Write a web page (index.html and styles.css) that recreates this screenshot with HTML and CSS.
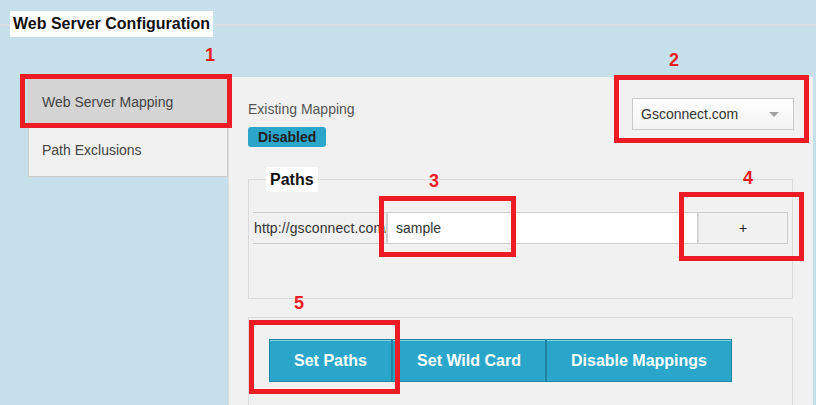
FILE: index.html
```html
<!DOCTYPE html>
<html>
<head>
<meta charset="utf-8">
<title>Web Server Configuration</title>
<link rel="stylesheet" href="styles.css">
</head>
<body>
<div class="page">
  <div class="header">
    <div class="header-line"></div>
    <h1 class="title">Web Server Configuration</h1>
  </div>
  <div class="layout">
    <ul class="sidebar">
      <li class="nav-item active">Web Server Mapping</li>
      <li class="nav-item">Path Exclusions</li>
    </ul>
    <div class="main">
      <div class="top-row">
        <div class="status">
          <div class="status-label">Existing Mapping</div>
          <span class="badge">Disabled</span>
        </div>
        <div class="select">
          <span class="select-text">Gsconnect.com</span>
          <span class="select-arrow"></span>
        </div>
      </div>
      <fieldset class="paths">
        <legend class="paths-legend">Paths</legend>
        <div class="input-group">
          <span class="addon">http://gsconnect.com/</span>
          <span class="path-input">sample</span>
          <span class="add-btn">+</span>
        </div>
      </fieldset>
      <div class="actions">
        <div class="btn-group">
          <span class="btn">Set Paths</span>
          <span class="btn">Set Wild Card</span>
          <span class="btn">Disable Mappings</span>
        </div>
      </div>
    </div>
  </div>
  <div class="annotations">
    <span class="num n1">1</span>
    <span class="num n2">2</span>
    <span class="num n3">3</span>
    <span class="num n4">4</span>
    <span class="num n5">5</span>
    <span class="mark m1"></span>
    <span class="mark m2"></span>
    <span class="mark m3"></span>
    <span class="mark m4"></span>
    <span class="mark m5"></span>
  </div>
</div>
</body>
</html>
```
FILE: styles.css
```css
* { box-sizing: border-box; }
html, body { margin: 0; padding: 0; }
body {
  background: #c5e0e8;
  font-family: "Liberation Sans", Arial, sans-serif;
  width: 816px;
  height: 405px;
  overflow: hidden;
}
.page {
  position: relative;
  padding-top: 11px;
  height: 405px;
  overflow: hidden;
}
.header {
  display: grid;
  height: 26px;
}
.header-line {
  grid-area: 1 / 1;
  align-self: start;
  margin-top: 13px;
  height: 2px;
  background: #dadfe1;
}
.title {
  grid-area: 1 / 1;
  justify-self: start;
  margin: 0 0 0 10px;
  padding: 0 3px;
  background: #fff;
  font-size: 16px;
  font-weight: bold;
  line-height: 26px;
  color: #111;
}
.layout {
  display: flex;
  align-items: flex-start;
  margin-top: 40px;
  padding-left: 28px;
}
.sidebar {
  list-style: none;
  margin: 1px 0 0 0;
  padding: 0;
  width: 200px;
  border: 1px solid #cdcdcd;
  background: #f0f0f0;
}
.nav-item {
  height: 50px;
  line-height: 49px;
  padding-left: 13px;
  font-size: 14px;
  color: #444;
}
.nav-item.active {
  height: 47px;
  line-height: 46px;
  background: #d4d4d4;
}
.main {
  flex: 1;
  height: 328px;
  overflow: hidden;
  margin-right: 3px;
  background: #f1f1f1;
  border-left: 1px solid #dcdcdc;
  padding: 21px 20px 0 19px;
}
.top-row {
  display: flex;
  justify-content: space-between;
  align-items: flex-start;
}
.status { margin-top: 1px; }
.status-label {
  font-size: 14px;
  line-height: 20px;
  color: #555;
}
.badge {
  display: inline-block;
  margin-top: 8px;
  height: 20px;
  line-height: 20px;
  padding: 0 10px;
  border-radius: 3px;
  background: #2ba6ca;
  color: #222;
  font-size: 14px;
  font-weight: bold;
}
.select {
  display: flex;
  align-items: center;
  justify-content: space-between;
  width: 162px;
  height: 32px;
  margin-right: -1px;
  padding: 0 14px 0 8px;
  border: 1px solid #cacaca;
  background: linear-gradient(#ffffff, #f3f3f3);
  font-size: 14px;
  color: #333;
}
.select-arrow {
  width: 0;
  height: 0;
  border-left: 5px solid transparent;
  border-right: 5px solid transparent;
  border-top: 5px solid #a0a0a0;
}
.paths {
  margin: 20px 0 0 0;
  padding: 20px 4px 54px 4px;
  border: 1px solid #dadada;
  min-width: 0;
}
.paths-legend {
  margin-left: 13px;
  padding: 0 4px;
  background: #fff;
  font-size: 16px;
  font-weight: bold;
  line-height: 25px;
  color: #111;
}
.input-group {
  display: flex;
  height: 32px;
}
.addon {
  width: 133px;
  overflow: hidden;
  white-space: nowrap;
  padding-left: 1px;
  border-top: 1px solid #cdcdcd;
  border-bottom: 1px solid #cdcdcd;
  font-size: 14px;
  letter-spacing: 0.1px;
  line-height: 30px;
  color: #333;
}
.path-input {
  width: 312px;
  background: #fff;
  border: 1px solid #cdcdcd;
  border-left: 2px solid #d0d0d0;
  padding-left: 8px;
  font-size: 14px;
  line-height: 30px;
  color: #333;
}
.add-btn {
  width: 90px;
  border: 1px solid #cdcdcd;
  border-left: 1px solid #dcdcdc;
  background: #f1f1f1;
  text-align: center;
  font-size: 14px;
  line-height: 30px;
  color: #222;
}
.actions {
  margin-top: 18px;
  height: 100px;
  border: 1px solid #dadada;
  padding: 21px 0 0 20px;
}
.btn-group { display: flex; }
.btn {
  height: 43px;
  line-height: 41px;
  background: #2aa6ca;
  border: 1px solid #1f84a3;
  box-shadow: inset 0 1px 0 rgba(255,255,255,0.45);
  color: #fff;
  font-size: 16px;
  font-weight: bold;
  white-space: nowrap;
  text-align: center;
}
.btn:nth-child(1) { width: 123px; }
.btn:nth-child(2) { width: 154px; }
.btn:nth-child(3) { width: 186px; }
.annotations {
  position: absolute;
  left: 0;
  top: 0;
  width: 816px;
  height: 405px;
  pointer-events: none;
}
.num {
  position: absolute;
  color: #ed1c24;
  font-size: 18px;
  font-weight: bold;
  line-height: 18px;
}
.n1 { left: 205px; top: 46px; }
.n2 { left: 669px; top: 51px; }
.n3 { left: 429px; top: 172px; }
.n4 { left: 743px; top: 169px; }
.n5 { left: 294px; top: 294px; }
.mark {
  position: absolute;
  border: 5px solid #ed1c24;
}
.m1 { left: 20px; top: 74px; width: 212px; height: 54px; }
.m2 { left: 614px; top: 75px; width: 195px; height: 68px; }
.m3 { left: 379px; top: 196px; width: 137px; height: 61px; }
.m4 { left: 679px; top: 192px; width: 125px; height: 69px; }
.m5 { left: 249px; top: 320px; width: 151px; height: 74px; }
```
